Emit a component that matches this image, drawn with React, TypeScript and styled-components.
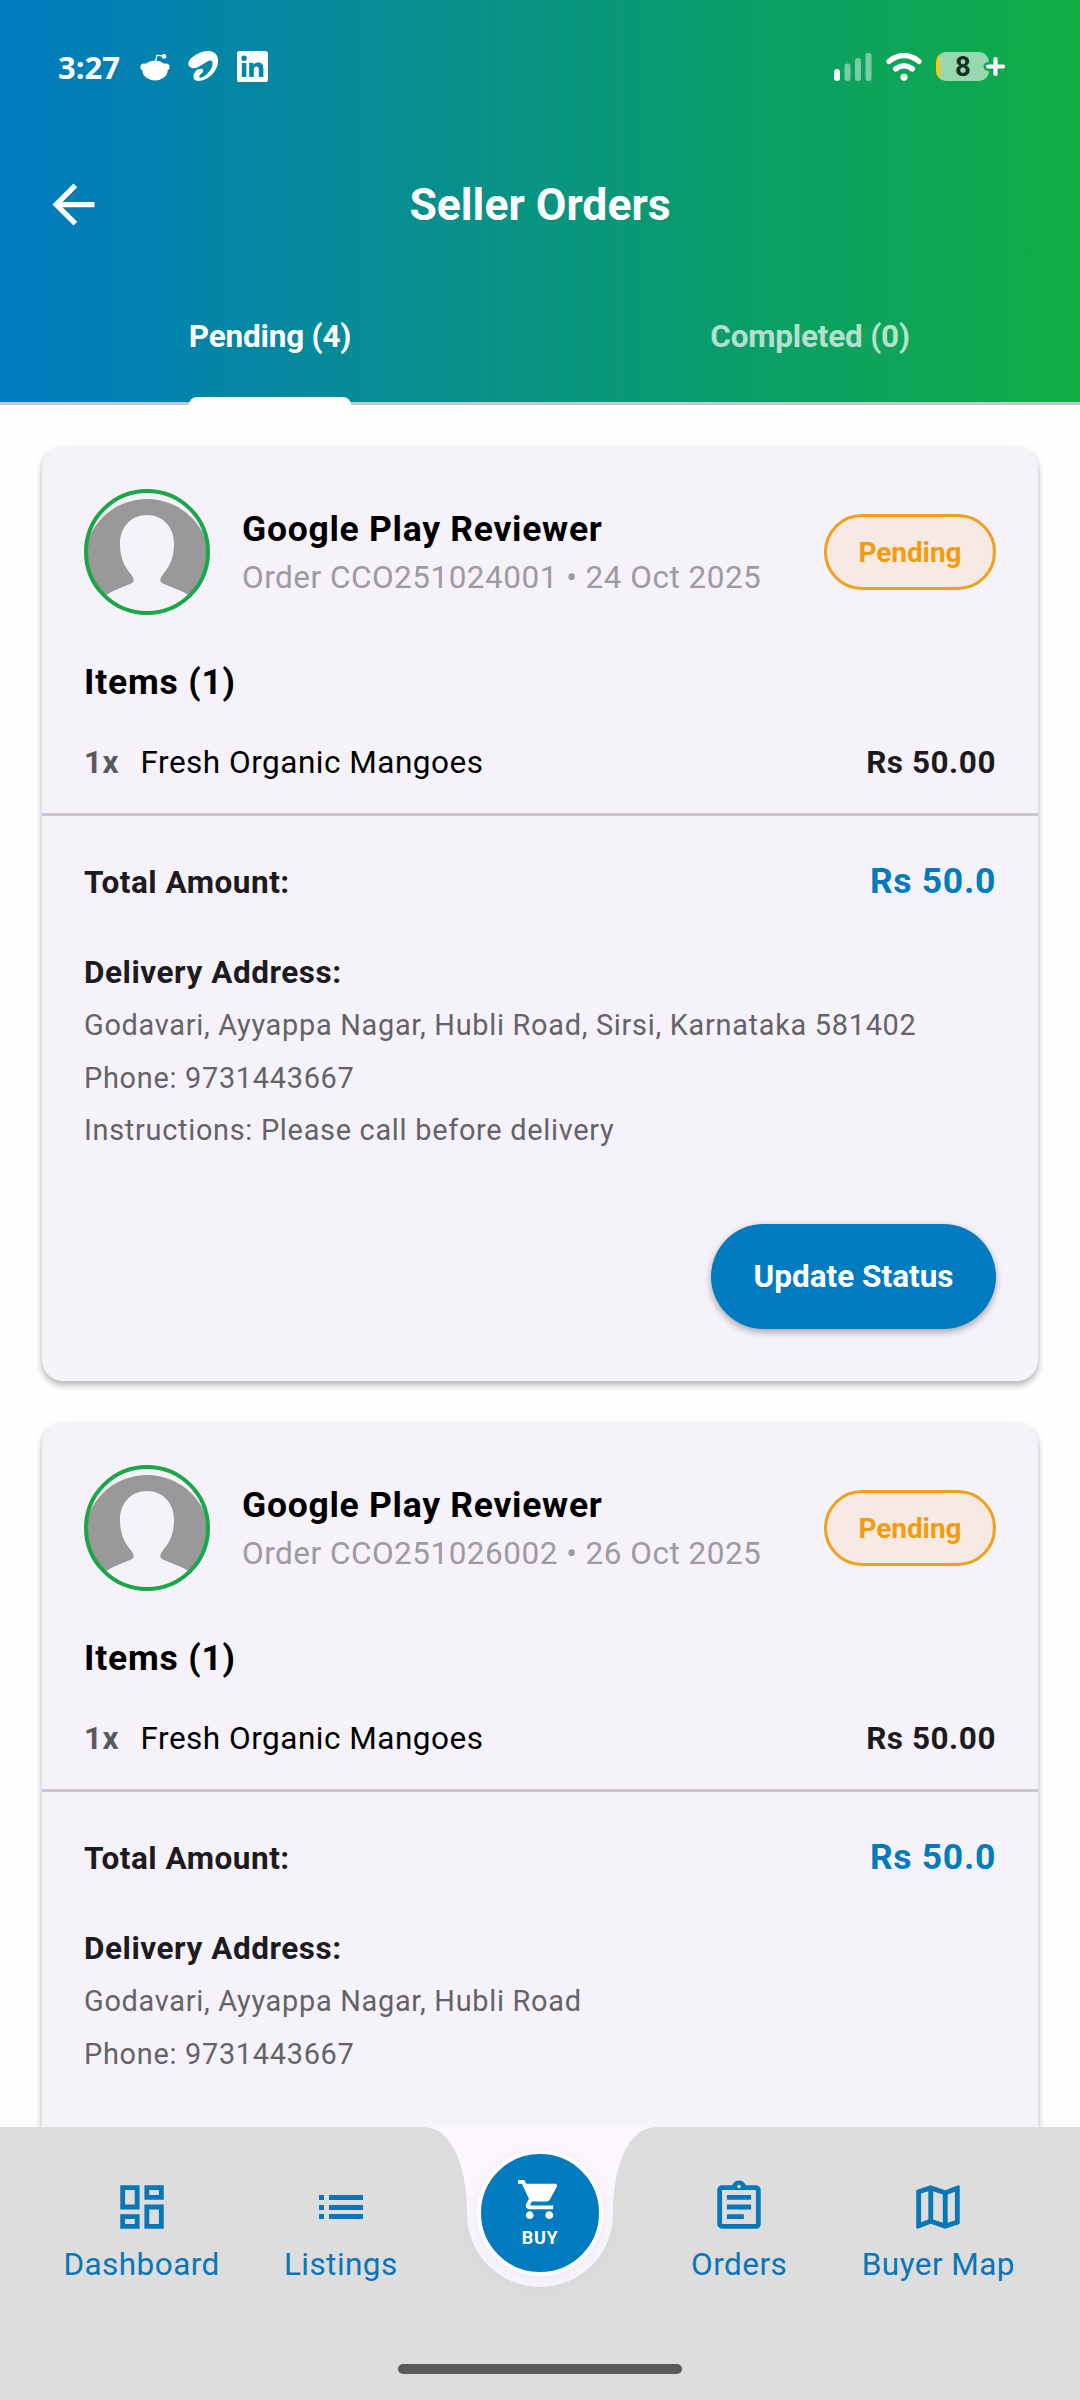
import React from 'react';
import styled, { createGlobalStyle } from 'styled-components';
import { MdArrowBack, MdOutlineDashboard, MdOutlineAssignment, MdOutlineMap, MdShoppingCart } from 'react-icons/md';

const Global = createGlobalStyle`
  * { box-sizing: border-box; }
  html, body { margin: 0; padding: 0; }
  body { background: #fff; font-family: Roboto, sans-serif; }
`;

const Screen = styled.div`
  width: 1080px;
  height: 2400px;
  overflow: hidden;
  display: flex;
  flex-direction: column;
  background: #fefefe;
  position: relative;
`;

const Header = styled.header`
  height: 402px;
  flex: none;
  color: #fff;
  background: linear-gradient(90deg, #007bc0 0%, #10ad42 100%);
`;

const StatusBar = styled.div`
  height: 133px;
  padding: 0 75px 0 58px;
  display: flex;
  justify-content: space-between;
  align-items: center;
`;

const StatusGroup = styled.div<{ $gap: number }>`
  display: flex;
  align-items: center;
  gap: ${p => p.$gap}px;
  svg { display: block; }
`;

const Clock = styled.span`
  font: 700 31px/40px "Open Sans", sans-serif;
  width: 64px;
  white-space: nowrap;
`;

const AppBar = styled.div`
  height: 141px;
  padding-top: 2px;
  display: grid;
  grid-template-columns: 146px 1fr 146px;
  align-items: center;
`;

const BackButton = styled.div`
  padding-left: 42px;
  svg { display: block; }
`;

const Title = styled.h1`
  margin: 0;
  text-align: center;
  font-size: 44.5px;
  font-weight: 700;
  line-height: 60px;
`;

const Tabs = styled.nav`
  display: grid;
  grid-template-columns: 1fr 1fr;
  height: 128px;
`;

const Tab = styled.div<{ $active?: boolean }>`
  justify-self: center;
  position: relative;
  padding-top: 43px;
  font-size: 31.5px;
  line-height: 40px;
  font-weight: 700;
  letter-spacing: -0.2px;
  white-space: nowrap;
  color: ${p => (p.$active ? '#fff' : 'rgba(255,255,255,0.7)')};
  ${p => p.$active && `
    &::after {
      content: '';
      position: absolute;
      left: 0; right: 0; bottom: -3px;
      height: 8px;
      border-radius: 8px 8px 0 0;
      background: #fff;
    }
  `}
`;

const Rule = styled.div`
  height: 3px;
  flex: none;
  background: #c9c5cf;
`;

const List = styled.main`
  flex: 1;
  min-height: 0;
  overflow: hidden;
  padding: 42px 42px 0;
  display: flex;
  flex-direction: column;
  gap: 42px;
`;

const Card = styled.article`
  flex: none;
  height: 934px;
  border-radius: 21px;
  background: #f6f2f9;
  box-shadow: 0 4px 6px rgba(0,0,0,0.24), 0 2px 8px rgba(0,0,0,0.08);
`;

const CardHead = styled.div`
  display: flex;
  align-items: center;
  padding: 42px 42px 0;
  height: 168px;
`;

const Avatar = styled.div`
  width: 126px;
  height: 126px;
  flex: none;
  svg { display: block; }
`;

const Who = styled.div`
  flex: 1;
  padding: 3px 0 0 32px;
`;

const Name = styled.div`
  font-size: 35.5px;
  line-height: 49px;
  font-weight: 700;
  letter-spacing: 0.72px;
  color: #000;
  white-space: nowrap;
`;

const OrderMeta = styled.div`
  font-size: 31.5px;
  line-height: 48px;
  letter-spacing: 0.49px;
  color: #9e9a9f;
  white-space: nowrap;
`;

const Badge = styled.div`
  width: 172px;
  height: 76px;
  border: 3px solid #f39f1c;
  border-radius: 38px;
  background: #f7eae2;
  color: #f39c12;
  font-size: 28px;
  font-weight: 700;
  letter-spacing: -0.1px;
  display: flex;
  align-items: center;
  justify-content: center;
`;

const ItemsTitle = styled.div`
  padding: 42px 42px 0;
  font-size: 35.5px;
  line-height: 50px;
  font-weight: 700;
  letter-spacing: 0.8px;
  color: #000;
`;

const Row = styled.div<{ $top: number; $height: number }>`
  margin-top: ${p => p.$top}px;
  height: ${p => p.$height}px;
  padding: 0 42px;
  display: flex;
  align-items: baseline;
  line-height: 40px;
  font-size: 31.5px;
`;

const Qty = styled.span`
  width: 56.5px;
  font-weight: 700;
  letter-spacing: 0.5px;
  color: #5b585e;
`;

const Product = styled.span`
  flex: 1;
  letter-spacing: 0.5px;
  color: #000;
`;

const Strong = styled.span`
  flex: none;
  font-weight: 700;
  letter-spacing: 0.53px;
  color: #1d1b20;
`;

const Amount = styled.span`
  margin-left: auto;
  font-size: 35.5px;
  font-weight: 700;
  letter-spacing: 0.7px;
  color: #007bc0;
`;

const Divider = styled.div`
  margin-top: 30px;
  height: 3px;
  background: #cac5ce;
`;

const Address = styled.div`
  padding: 0 42px;
  margin-top: 6px;
`;

const AddressLine = styled.div`
  font-size: 28.9px;
  line-height: 52.5px;
  letter-spacing: 0.71px;
  color: #656268;
  white-space: nowrap;
`;

const Actions = styled.div`
  display: flex;
  justify-content: flex-end;
  padding: 67px 42px 0;
`;

const UpdateButton = styled.button`
  width: 285px;
  height: 105px;
  border: 0;
  border-radius: 53px;
  background: #007bc0;
  color: #fff;
  font: 700 31.5px/40px Roboto, sans-serif;
  letter-spacing: 0;
  white-space: nowrap;
  padding: 1px 0 0;
  box-shadow: 0 4px 6px rgba(0,0,0,0.22), 0 1px 8px rgba(0,0,0,0.12);
`;

const BottomBar = styled.footer`
  position: absolute;
  left: 0;
  right: 0;
  bottom: 0;
  height: 273px;
`;

const BarShape = styled.svg`
  position: absolute;
  inset: 0;
`;

const NavRow = styled.div`
  position: relative;
  display: grid;
  grid-template-columns: repeat(5, 1fr);
  padding: 0 42px;
`;

const NavItem = styled.div`
  display: flex;
  flex-direction: column;
  align-items: center;
  padding-top: 51px;
  color: #0877b8;
  font-size: 31.5px;
  line-height: 40px;
  letter-spacing: 0.45px;
  white-space: nowrap;
  svg { display: block; }
`;

const NavLabel = styled.span`
  margin-top: 9px;
`;

const BuyButton = styled.div`
  justify-self: center;
  margin-top: 23px;
  width: 126px;
  height: 126px;
  border: 4px solid #fff;
  border-radius: 50%;
  background: #007bc0;
  color: #fff;
  box-shadow: 0 4px 26px rgba(0, 60, 140, 0.08);
  display: flex;
  flex-direction: column;
  align-items: center;
  padding-top: 22px;
  font-size: 18px;
  line-height: 22px;
  font-weight: 700;
  letter-spacing: 0.6px;
  svg { display: block; }
`;

const BuyLabel = styled.span`
  margin-top: 4px;
`;

const HomeHandle = styled.div`
  position: absolute;
  left: 398px;
  bottom: 26px;
  width: 284px;
  height: 10px;
  border-radius: 5px;
  background: #5a5a5a;
`;

const RedditGlyph = () => (
  <svg width="30" height="28" viewBox="0 0 30 28" fill="#fff">
    <ellipse cx="15" cy="17.5" rx="12.6" ry="10" />
    <circle cx="4" cy="14" r="3.6" />
    <circle cx="26" cy="14" r="3.6" />
    <path d="M15.6 8.5 L17 2.2 L23 3.2" fill="none" stroke="#fff" strokeWidth="1.3" />
    <circle cx="24" cy="3.4" r="2.4" />
  </svg>
);

const AirtelGlyph = () => (
  <svg width="31" height="31" viewBox="0 0 31 31" fill="#fff">
    <path d="M4 17 C-1 15.5 -1 10.5 4 6.5 C11 0.5 20 -1.5 26 1.5 C31 4.5 31 12 28 18 C24 26 16 30 10 30 C6 30 4.5 27 6 23 C7.2 19.5 10 17.8 13 17.8 C16 18 16 20.5 13.5 22.5 C11 24.8 10.5 26 12 26.8 C15 27.5 22 21 24 16 C25.5 11.5 24 8.5 20.5 10 C15 12.5 9 18.5 4 17 Z" />
  </svg>
);

const LinkedinGlyph = () => (
  <svg width="31" height="31" viewBox="0 0 31 31">
    <rect width="31" height="31" rx="2.6" fill="#fff" />
    <g fill="#0583ad">
      <circle cx="7.1" cy="7.3" r="2.7" />
      <rect x="4.8" y="12" width="4.6" height="14" />
      <path d="M12.2 12h4.4v2c.9-1.5 2.500-2.400 4.600-2.400 4 0 5.200 2.600 5.200 6.500V26h-4.600v-7c0-1.900-.4-3.500-2.300-3.500-2 0-2.700 1.500-2.700 3.500v7h-4.600z" />
    </g>
  </svg>
);

const SignalGlyph = () => (
  <svg width="38" height="28" viewBox="0 0 38 28" fill="#fff">
    <rect x="0" y="16" width="6" height="12" rx="3" />
    <g opacity="0.45">
      <rect x="10.5" y="10.5" width="6" height="17.5" rx="3" />
      <rect x="21" y="5" width="6" height="23" rx="3" />
      <rect x="31.5" y="0" width="6" height="28" rx="3" />
    </g>
  </svg>
);

const WifiGlyph = () => (
  <svg width="36" height="28" viewBox="0 0 36 28" fill="none" stroke="#fff" strokeLinecap="round">
    <path d="M3 8.3 Q18 -3.2 33 8.3" strokeWidth="5.4" />
    <path d="M9.8 15.8 Q18 9.8 26.2 15.8" strokeWidth="5.4" />
    <circle cx="18" cy="24.3" r="3.5" fill="#fff" stroke="none" />
  </svg>
);

const ListGlyph = ({ size = 58 }: { size?: number }) => (
  <svg width={size} height={size} viewBox="0 0 58 58" fill="currentColor">
    <path d="M7 17h5v5H7zM17 17h34v5H17zM7 27h5v5H7zM17 27h34v5H17zM7 36h5v5H7zM17 36h34v5H17z" />
  </svg>
);

const Battery = styled.div`
  position: relative;
  width: 69px;
  height: 29px;
  svg { display: block; }
`;

const BatteryLevel = styled.span`
  position: absolute;
  left: 0;
  top: 0;
  width: 54px;
  text-align: center;
  font-size: 27.5px;
  font-weight: 700;
  line-height: 29px;
  color: #14331f;
`;

const BatteryGauge = () => (
  <Battery>
    <svg width="69" height="29" viewBox="0 0 69 29">
      <defs>
        <clipPath id="shell"><rect width="53" height="29" rx="10" /></clipPath>
        <mask id="plusGap">
          <rect width="69" height="29" fill="#fff" />
          <path d="M52 14.5H66M59.5 7V22" stroke="#000" strokeWidth="9" strokeLinecap="round" />
        </mask>
      </defs>
      <g clipPath="url(#shell)" mask="url(#plusGap)">
        <rect width="53" height="29" fill="#98d8ae" />
        <rect width="4" height="29" fill="#fcc419" />
      </g>
      <path d="M52 14.5H67M59.5 7V22" stroke="#fff" strokeWidth="4.2" strokeLinecap="round" />
    </svg>
    <BatteryLevel>8</BatteryLevel>
  </Battery>
);

const AvatarArt = () => (
  <svg width="126" height="126" viewBox="0 0 126 126">
    <defs>
      <clipPath id="avatarClip"><circle cx="63" cy="63" r="61" /></clipPath>
    </defs>
    <g clipPath="url(#avatarClip)">
      <circle cx="63" cy="73" r="63" fill="#999" />
      <path fill="#f6f2f9" d="M63 26 C79 26 90 38 90 55 C90 68 86 77 80 84 C76 89 75 92 78 94 C84 97 97 101 106 107 L106 130 H18 L21 107 C29 101 42 97 48 94 C51 92 50 89 46 84 C40 77 36 68 36 55 C36 38 47 26 63 26 Z" />
    </g>
    <circle cx="63" cy="63" r="61" fill="none" stroke="#1aa748" strokeWidth="4" />
  </svg>
);

type Order = { id: string; date: string; address: string[] };

const orders: Order[] = [
  {
    id: 'CCO251024001',
    date: '24 Oct 2025',
    address: [
      'Godavari, Ayyappa Nagar, Hubli Road, Sirsi, Karnataka 581402',
      'Phone: 9731443667',
      'Instructions: Please call before delivery',
    ],
  },
  {
    id: 'CCO251026002',
    date: '26 Oct 2025',
    address: ['Godavari, Ayyappa Nagar, Hubli Road', 'Phone: 9731443667'],
  },
];

const OrderCard = ({ order }: { order: Order }) => (
  <Card>
    <CardHead>
      <Avatar><AvatarArt /></Avatar>
      <Who>
        <Name>Google Play Reviewer</Name>
        <OrderMeta>Order {order.id} • {order.date}</OrderMeta>
      </Who>
      <Badge>Pending</Badge>
    </CardHead>
    <ItemsTitle>Items (1)</ItemsTitle>
    <Row $top={36} $height={40}>
      <Qty>1x</Qty>
      <Product>Fresh Organic Mangoes</Product>
      <Strong>Rs 50.00</Strong>
    </Row>
    <Divider />
    <Row $top={45} $height={40}>
      <Strong>Total Amount:</Strong>
      <Amount>Rs 50.0</Amount>
    </Row>
    <Row $top={52} $height={40}>
      <Strong>Delivery Address:</Strong>
    </Row>
    <Address>
      {order.address.map(line => <AddressLine key={line}>{line}</AddressLine>)}
    </Address>
    <Actions><UpdateButton>Update Status</UpdateButton></Actions>
  </Card>
);

const NavEntry = ({ icon: Icon, label }: { icon: React.ComponentType<{ size?: number }>; label: string }) => (
  <NavItem>
    <Icon size={58} />
    <NavLabel>{label}</NavLabel>
  </NavItem>
);

export default function App() {
  return (
    <>
      <Global />
      <Screen>
        <Header>
          <StatusBar>
            <StatusGroup $gap={18}>
              <Clock>3:27</Clock>
              <RedditGlyph />
              <AirtelGlyph />
              <LinkedinGlyph />
            </StatusGroup>
            <StatusGroup $gap={14}>
              <SignalGlyph />
              <WifiGlyph />
              <BatteryGauge />
            </StatusGroup>
          </StatusBar>
          <AppBar>
            <BackButton><MdArrowBack size={63} /></BackButton>
            <Title>Seller Orders</Title>
          </AppBar>
          <Tabs>
            <Tab $active>Pending (4)</Tab>
            <Tab>Completed (0)</Tab>
          </Tabs>
        </Header>
        <Rule />
        <List>
          {orders.map(order => <OrderCard key={order.id} order={order} />)}
        </List>
        <BottomBar>
          <BarShape width="1080" height="273" viewBox="0 0 1080 273">
            <rect x="415" width="250" height="170" fill="#fdf7ff" />
            <path
              fill="#ddd"
              d="M0 0H423C453 0 467 40 467 87A73 73 0 0 0 613 87C613 40 627 0 657 0H1080V273H0Z"
            />
          </BarShape>
          <NavRow>
            <NavEntry icon={MdOutlineDashboard} label="Dashboard" />
            <NavEntry icon={ListGlyph} label="Listings" />
            <BuyButton>
              <MdShoppingCart size={47} />
              <BuyLabel>BUY</BuyLabel>
            </BuyButton>
            <NavEntry icon={MdOutlineAssignment} label="Orders" />
            <NavEntry icon={MdOutlineMap} label="Buyer Map" />
          </NavRow>
          <HomeHandle />
        </BottomBar>
      </Screen>
    </>
  );
}
